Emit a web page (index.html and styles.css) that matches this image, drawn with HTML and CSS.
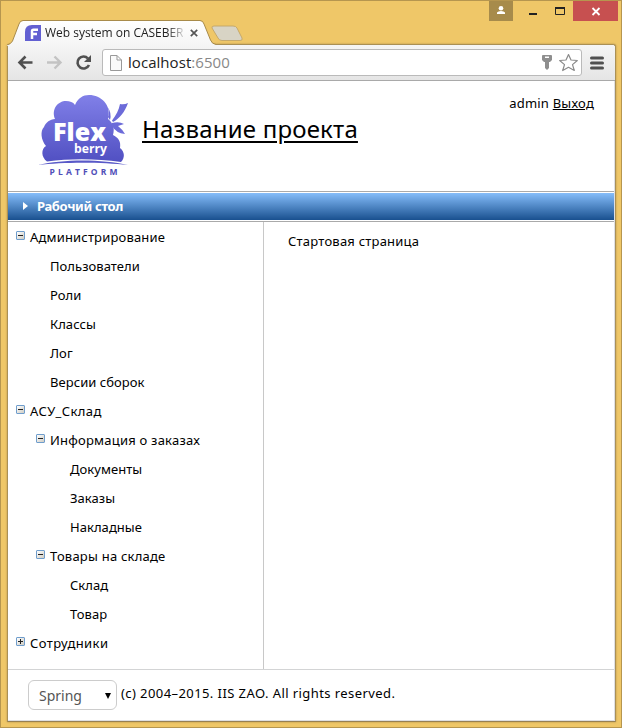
FILE: index.html
```
<!DOCTYPE html>
<html lang="ru">
<head>
<meta charset="utf-8">
<title>Web system on CASEBERRY</title>
<link rel="stylesheet" href="styles.css">
</head>
<body>
<div class="window">
  <div class="titlebar">
    <svg class="tab-shape" width="250" height="26" viewBox="0 20 250 26">
      <defs>
        <linearGradient id="tabfill" x1="0" y1="0" x2="0" y2="1"><stop offset="0" stop-color="#fff"/><stop offset="1" stop-color="#f5f5f5"/></linearGradient>
      </defs>
      <path d="M7 46V45Q11 44 12.500 41L19 24Q20 21 23 21H200Q203 21 204 24L210.500 40Q212 44 216 44.500V46Z" fill="url(#tabfill)"/>
      <path d="M7 45Q11 44 12.500 41L19 24Q20 20.500 23 20.500H200Q203 20.500 204 24L210.500 40Q212 44 216 44.500" fill="none" stroke="#a88b4b"/>
      <path d="M214 26H233Q236 26 237 28L242 38Q243 40.500 240 40.500H222Q219 40.500 218 38L212 28Q211.500 26 214 26Z" fill="#d8d4c5" stroke="#c2a566" stroke-width=".9"/>
    </svg>
    <div class="tab">
      <svg class="favicon" width="16" height="16" viewBox="0 0 16 16"><path d="M0 16V7Q0 0 7 0H16V16Z" fill="#6260d2"/><path d="M7 14V6Q7 4.700 8.500 4.700H13M7 9H12" fill="none" stroke="#fff" stroke-width="2.500"/></svg>
      <span class="tab-title">Web system on CASEBERR</span>
      <svg class="tab-close" width="8" height="8" viewBox="0 0 8 8"><path d="M.8 .8L7.200 7.200M7.200 .8L.8 7.200" stroke="#555" stroke-width="1.700"/></svg>
    </div>
    <div class="controls">
      <div class="user"><svg width="24" height="20" viewBox="0 0 24 20"><circle cx="12" cy="7.300" r="2.300" fill="#fff"/><path d="M8 13V11.500Q9 10 12 10T16 11.500V13Z" fill="#fff"/></svg></div>
      <svg width="60" height="20" viewBox="0 0 60 20"><path d="M16 13H24" stroke="#222" stroke-width="2"/><path d="M42.500 7V13.500H51.500V7" fill="none" stroke="#222"/><path d="M42 7H52" stroke="#222" stroke-width="2"/></svg>
      <div class="close"><svg width="45" height="20" viewBox="0 0 45 20"><path d="M19.500 7L26.500 14M26.500 7L19.500 14" stroke="#fff" stroke-width="1.800"/></svg></div>
    </div>
  </div>
  <div class="frame">
    <div class="toolbar">
      <svg class="nav" width="94" height="35" viewBox="8 45 94 35" fill="none">
        <path d="M32.500 62.500H20M25.500 56.500L19.500 62.500L25.500 68.500" stroke="#505050" stroke-width="2.600"/>
        <path d="M47 62.500H60M54.500 56.500L60.500 62.500L54.500 68.500" stroke="#c3c3c3" stroke-width="2.400"/>
        <path d="M88 58.500A6 6 0 1 0 89 65" stroke="#505050" stroke-width="2.600"/><path d="M91 55V62H84Z" fill="#505050"/>
      </svg>
      <div class="address">
        <svg width="12" height="16" viewBox="0 0 12 16"><path d="M.5 .5H7L11.500 5V15.500H.5ZM7 .5V5H11.500" fill="#fafafa" stroke="#999"/></svg>
        <span class="url">localhost<span class="port">:6500</span></span>
        <svg class="addr-icons" width="40" height="22" viewBox="541 52 40 22"><path fill-rule="evenodd" d="M543 55H551Q552 55 552 56V60L550 62H549V68L547 70L545 68V62H544L542 60V56Q542 55 543 55ZM545 56.500V58H549V56.500Z" fill="#8e8e8e"/><path d="M568.500 54.500L571 60L577.300 60.500L572.500 64.600L574.300 70.500L568.500 67.300L562.700 70.500L564.500 64.600L559.700 60.500L566 60Z" fill="#fff" stroke="#8a8a8a" stroke-width="1.200" stroke-linejoin="round"/></svg>
      </div>
      <svg class="menu" width="14" height="14" viewBox="0 0 14 14"><path d="M1.500 2H12.500M1.500 7H12.500M1.500 12H12.500" stroke="#505050" stroke-width="3" stroke-linecap="round"/></svg>
    </div>
    <div class="page">
      <header class="header">
        <svg class="logo" width="94" height="86" viewBox="36 92 94 86">
          <defs><linearGradient id="cloud" x1="0" y1="0" x2="0" y2="1"><stop offset="0" stop-color="#8180e8"/><stop offset="1" stop-color="#5150c2"/></linearGradient></defs>
          <path d="M47 161.500C41 157 41 149 46 146C41 140 40 131 44 127C46 122 50 119.500 55 119C51 109 58 101 66 101C70 101 73 102 75 105C78 98 83 95 89 95C101 95 112 105 108 119C113 123 115 128 113 135C119 138 121 142 120 148C125 152 125 158 121 162C96 158.500 70 158.500 47 161.500Z" fill="url(#cloud)"/>
          <path d="M38 165C63 159 102 159 128 165C102 162 63 162 38 165Z" fill="#5959c8"/>
          <path d="M112 120.500C116 115 119 110 120 104Q124 105 128 103C125 112 119 119 113 122Z" fill="#6c6bd9"/>
          <path d="M107.500 107Q112 113 110 120L108 117Q110 112 107.500 107ZM112 123Q119 121 124 124L118 126Q122 129 125 134Q116 133 112 126Z" fill="#6c6bd9"/>
          <text x="53" y="141" class="logo-flex" textLength="53" lengthAdjust="spacingAndGlyphs">Flex</text>
          <text x="74" y="152.500" class="logo-berry" textLength="33" lengthAdjust="spacingAndGlyphs">berry</text>
          <text x="49.500" y="174.500" class="logo-platform" textLength="68">PLATFORM</text>
        </svg>
        <a class="project">Название проекта</a>
        <div class="account">admin <a>Выход</a></div>
      </header>
      <nav class="desktop-bar"><span class="arrow"></span><span>Рабочий стол</span></nav>
      <div class="content">
        <ul class="tree">
          <li><i class="toggle"></i><span>Администрирование</span></li>
          <li class="level2">Пользователи</li>
          <li class="level2">Роли</li>
          <li class="level2">Классы</li>
          <li class="level2">Лог</li>
          <li class="level2">Версии сборок</li>
          <li class="wide"><i class="toggle"></i><span>АСУ_Склад</span></li>
          <li class="group"><i class="toggle"></i><span>Информация о заказах</span></li>
          <li class="level3">Документы</li>
          <li class="level3">Заказы</li>
          <li class="level3">Накладные</li>
          <li class="group"><i class="toggle"></i><span>Товары на складе</span></li>
          <li class="level3">Склад</li>
          <li class="level3">Товар</li>
          <li class="wide"><i class="toggle plus"></i><span>Сотрудники</span></li>
        </ul>
        <main class="start">Стартовая страница</main>
      </div>
      <footer class="footer">
        <div class="theme"><span>Spring</span><i class="caret"></i></div>
        <span class="copyright">(c) 2004–2015. IIS ZAO. All rights reserved.</span>
      </footer>
    </div>
  </div>
</div>
</body>
</html>
```

FILE: styles.css
```
* { box-sizing: border-box; }
body { margin: 0; font-family: "Noto Sans", "Open Sans", sans-serif; font-size: 13px; color: #000; }
svg { display: block; flex: none; }
.window { width: 622px; height: 728px; border: 1px solid #b6964f; background: #efc768; padding: 0 5px 5px 6px; overflow: hidden; }
.titlebar { position: relative; height: 43px; display: flex; justify-content: space-between; }
.tab-shape { position: absolute; left: -7px; top: 19px; z-index: 1; }
.tab { position: relative; z-index: 2; display: flex; align-items: center; height: 18px; margin: 23px 0 0 18px; }
.tab-title { width: 138px; margin-left: 4px; font-family: "Open Sans", sans-serif; font-size: 12px; letter-spacing: -.02px; line-height: 18px; white-space: nowrap; overflow: hidden; color: #222; -webkit-mask-image: linear-gradient(90deg, #000 122px, transparent 142px); mask-image: linear-gradient(90deg, #000 122px, transparent 142px); }
.tab-close { margin-left: 7px; }
.controls { display: flex; height: 20px; margin-right: -2px; }
.user { width: 24px; background: #a78b4b; }
.close { width: 45px; background: #c75050; }
.frame { height: 678px; border: 1px solid #aa9055; border-bottom-color: #978052; border-radius: 3px 3px 0 0; background: #fff; box-shadow: 0 0 2px #a8884b; }
.toolbar { display: flex; align-items: center; height: 36px; background: linear-gradient(#f5f5f5, #e5e5e5); border-bottom: 1px solid #a9a9a9; border-radius: 3px 3px 0 0; }
.address { display: flex; align-items: center; width: 480px; height: 27px; padding: 0 0 0 7px; background: #fff; border: 1px solid #bababa; border-radius: 3px; }
.url { flex: 1; margin-left: 6px; font: 15px/24px "Open Sans", sans-serif; letter-spacing: .05px; color: #222; position: relative; top: -1px; }
.port { color: #888; }
.menu { margin-left: 8px; }
.page { height: 640px; border-right: 1px solid #dedfe3; border-bottom: 1px solid #dedfe3; }
.header { display: flex; height: 111px; padding: 11px 20px 0 28px; border-bottom: 1px solid #aaa; }
.project { margin: 19px 0 0 12px; font-size: 24px; line-height: 36px; letter-spacing: .2px; text-decoration: underline; text-decoration-thickness: 2px; text-underline-offset: 3px; white-space: nowrap; }
.account { margin: 1px 0 0 auto; line-height: 20px; letter-spacing: .22px; }
.account a { text-decoration: underline; }
.logo-flex { font: 800 24px "Open Sans", sans-serif; fill: #fff; }
.logo-berry { font: 700 12px "Open Sans", sans-serif; fill: #fff; }
.logo-platform { font: 700 8.500px "Open Sans", sans-serif; fill: #4f4eb8; }
.desktop-bar { display: flex; align-items: center; height: 27px; margin: 1px 0; padding: 0 0 2px 15px; background: linear-gradient(#85bdfa, #19508f); color: #fff; font-weight: 700; letter-spacing: -.35px; }
.arrow { width: 5px; border: 4px solid transparent; border-left: 5px solid #fff; border-right: 0; margin-right: 9px; }
.content { display: flex; height: 449px; border-top: 1px solid #aaa; border-bottom: 1px solid #d3d4d5; }
.tree { width: 256px; margin: 0; padding: 1px 0 0 8px; border-right: 1px solid #c8c8c8; list-style: none; }
.tree li { display: flex; height: 29px; line-height: 29px; letter-spacing: .17px; white-space: nowrap; }
.tree .wide { letter-spacing: .4px; }
.tree .level2 { padding-left: 34px; letter-spacing: .05px; }
.tree .group { padding-left: 20px; letter-spacing: .22px; }
.tree .level3 { padding-left: 54px; letter-spacing: .05px; }
.toggle { width: 9px; height: 9px; margin: 8px 5px 0 0; border: 1px solid #6f9dcc; border-radius: 1px; background: linear-gradient(#222, #222) center / 5px 1px no-repeat, linear-gradient(135deg, #fff, #cfccc2); }
.toggle.plus { background: linear-gradient(#222, #222) center / 5px 1px no-repeat, linear-gradient(#222, #222) center / 1px 5px no-repeat, linear-gradient(135deg, #fff, #cfccc2); }
.start { padding: 9px 0 0 24px; line-height: 20px; letter-spacing: .22px; }
.footer { display: flex; padding: 10px 0 0 20px; }
.theme { display: flex; justify-content: space-between; align-items: center; width: 89px; height: 30px; padding: 1px 5px 0 10px; border: 1px solid #ccc; border-radius: 6px; color: #555; font-size: 14px; }
.caret { border: 3px solid transparent; border-top: 6px solid #000; border-bottom: 0; }
.copyright { margin-left: 4px; line-height: 27px; letter-spacing: .42px; white-space: nowrap; }
```
